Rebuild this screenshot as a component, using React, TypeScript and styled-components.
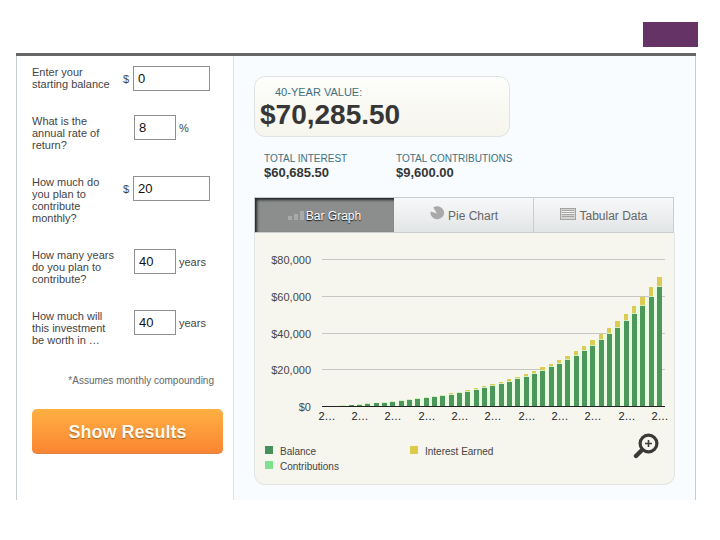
import React from "react";
import styled, { createGlobalStyle, css } from "styled-components";

const GlobalStyle = createGlobalStyle`
  *, *::before, *::after { box-sizing: border-box; }
  body {
    margin: 0;
    background: #fff;
    color: #444;
    font-family: "Liberation Sans", Arial, Helvetica, sans-serif;
    font-size: 11px;
    line-height: 12px;
  }
  input, button { font-family: inherit; margin: 0; }
`;

const Page = styled.div`
  padding: 22px 24px 40px 16px;
`;

const Accent = styled.div`
  width: 55px;
  height: 25px;
  margin: 0 -2px 6px auto;
  background: #663366;
`;

const Calculator = styled.main`
  display: grid;
  grid-template-columns: 218px minmax(0, 1fr);
  border-top: 3px solid #666;
`;

const Sidebar = styled.form`
  padding: 10px 10px 40px 15px;
  border-left: 1px solid #c5cdd0;
  border-right: 1px solid #dfe4e6;
`;

const Results = styled.section`
  padding: 20px 20px 15px 20px;
  background: #f8fcfe;
  border-right: 1px solid #c5cdd0;
`;

const Field = styled.div`
  display: grid;
  grid-template-columns: 88px 13px 1fr;
  align-items: start;
`;

const Label = styled.label`
  white-space: pre-line;
  padding-bottom: 25px;
`;

const Unit = styled.span`
  line-height: 26px;
  padding-left: 3px;
`;

const Entry = styled.div<{ $narrow?: boolean }>`
  display: flex;
  padding-left: ${(p) => (p.$narrow ? "1px" : "0")};
`;

const NumberBox = styled.input<{ $narrow?: boolean }>`
  width: ${(p) => (p.$narrow ? "42px" : "77px")};
  height: 25px;
  padding: 0 4px;
  border: 1px solid #8f8f8f;
  border-radius: 0;
  background: #fff;
  color: #111;
  font-size: 13px;
`;

const Footnote = styled.p`
  margin: 4px 9px 22px 0;
  text-align: right;
  font-size: 10px;
  color: #666;
`;

const Submit = styled.button`
  display: block;
  width: 100%;
  height: 45px;
  padding: 2px 0 0;
  border: 0;
  border-bottom: 1px solid #d8854a;
  border-radius: 5px;
  background: linear-gradient(#ffb043, #fb8532);
  color: #fff8e8;
  font-size: 18px;
  font-weight: bold;
  text-shadow: 0 1px 1px #9a6a30;
`;

const Headline = styled.div`
  width: 256px;
  height: 61px;
  padding: 9px 5px 0;
  border: 1px solid #e0e4e0;
  border-radius: 11px;
  background: linear-gradient(#fdfdfb, #f6f5ed);
`;

const Caption = styled.div<{ $indent?: boolean }>`
  color: #41707f;
  font-size: ${(p) => (p.$indent ? "11px" : "10px")};
  padding-left: ${(p) => (p.$indent ? "15px" : "0")};
`;

const Amount = styled.div<{ $large?: boolean }>`
  color: #363636;
  font-weight: bold;
  font-size: ${(p) => (p.$large ? "28px" : "13px")};
  line-height: ${(p) => (p.$large ? "34px" : "16px")};
`;

const Totals = styled.div`
  display: grid;
  grid-template-columns: 132px 1fr;
  padding: 16px 0 16px 10px;
`;

const Tabs = styled.div`
  display: grid;
  grid-template-columns: repeat(3, 1fr);
  margin-right: 1px;
`;

const Tab = styled.button<{ $active?: boolean }>`
  display: flex;
  align-items: center;
  justify-content: center;
  gap: 3px;
  height: 36px;
  padding: 2px 0 0 1px;
  border: 1px solid #c9cdcf;
  border-left-width: 0;
  background: linear-gradient(#f7f8f9, #e2e5e6);
  color: #666;
  font-size: 12px;
  ${(p) =>
    p.$active &&
    css`
      gap: 1px;
      padding-left: 0;
      border-left-width: 1px;
      border-right-width: 0;
      background: #8b8e8d;
      box-shadow: inset 2px 2px 3px #202526;
      color: #fff;
      text-shadow: 0 1px 1px #111;
    `}
`;

const ChartPanel = styled.div`
  padding: 16px 4px 10px 8px;
  border: 1px solid #e3e6e2;
  border-top: 0;
  border-radius: 0 0 11px 11px;
  background: #f6f5ee;
`;

const Chart = styled.svg`
  display: block;
  width: 100%;
  height: auto;
  font-size: 11px;
`;

const ChartFooter = styled.div`
  display: flex;
  justify-content: space-between;
  align-items: flex-start;
  padding: 9px 11px 0 2px;
`;

const Legend = styled.ul`
  display: grid;
  grid-template-columns: 145px 1fr;
  margin: 11px 0 0;
  padding: 0;
  list-style: none;
  font-size: 10px;
  line-height: 15px;
`;

const LegendItem = styled.li<{ $color: string }>`
  display: flex;
  gap: 7px;
  &::before {
    content: "";
    width: 8px;
    height: 8px;
    margin-top: 2px;
    background: ${(p) => p.$color};
  }
`;

const ZoomButton = styled.button`
  padding: 0;
  border: 0;
  background: none;
  line-height: 0;
`;

const YEARS = 40;
const MONTHLY = 20;
const RATE = 0.08 / 12;
const HEIGHT = 147;
const MAX = 80000;

const balanceAfter = (years: number) =>
  ((MONTHLY * ((1 + RATE) ** (12 * years) - 1)) / RATE) * (1 + RATE);

const bars = Array.from({ length: YEARS + 1 }, (_, year) => {
  const total = balanceAfter(year);
  const start = year > 0 ? balanceAfter(year - 1) : 0;
  const scale = (v: number) => Math.round((v / MAX) * HEIGHT);
  return {
    x: Math.round(60.7 + (year * 25) / 3),
    balance: scale(start),
    total: scale(total),
  };
});

const BASE = 157;

function BarChart() {
  return (
    <Chart viewBox="0 0 407 175" role="img" aria-label="Balance by year">
      {[0, 1, 2, 3, 4].map((i) => {
        const y = Math.round(BASE - (i * HEIGHT) / 4);
        return (
          <g key={i}>
            <text x="48" y={y + 5} textAnchor="end" fill="#484848">
              {"$" + (i * 20000).toLocaleString("en-US")}
            </text>
            {i > 0 && <rect x="59" y={y} width="343" height="1" fill="#c6c8c2" />}
          </g>
        );
      })}
      {bars.map((b, i) => (
        <g key={i} shapeRendering="crispEdges">
          {i > 0 && (
            <rect x={b.x - 4} y={BASE - b.balance} width="4" height={b.balance} fill="#ebfae3" />
          )}
          {b.total > b.balance && (
            <>
              <rect x={b.x} y={BASE - b.total} width="5" height={b.total - b.balance} fill="#dccc56" />
              <rect x={b.x} y={BASE - b.balance - 1} width="5" height="1" fill="#d2f0b4" />
            </>
          )}
        </g>
      ))}
      {bars.map((b, i) => (
        <rect key={i} x={b.x} y={BASE - b.balance} width="5" height={b.balance} fill="#4c985a" shapeRendering="crispEdges" />
      ))}
      <rect x="59" y={BASE} width="343" height="1" fill="#222" />
      {bars
        .filter((_, i) => i % 4 === 0)
        .map((b) => (
          <text key={b.x} x={b.x + 3} y={BASE + 14} textAnchor="middle" fill="#222">
            2…
          </text>
        ))}
    </Chart>
  );
}

const BarsIcon = () => (
  <svg width="17" height="12" viewBox="0 0 17 12" fill="#a7aaa9" aria-hidden="true">
    <rect x="0" y="6" width="4" height="4" />
    <rect x="6" y="4" width="4" height="6" />
    <rect x="12" y="1" width="4" height="9" />
  </svg>
);

const PieIcon = () => (
  <svg width="15" height="20" viewBox="0 0 15 20" aria-hidden="true">
    <path d="M7 7.5 3.2 1.6A6.8 6.5 0 1 1 .6 5.5Z" fill="#a9a9a9" />
  </svg>
);

const TableIcon = () => (
  <svg width="16" height="16" viewBox="0 0 16 16" aria-hidden="true">
    <rect x="0.5" y="0.5" width="15" height="11" fill="#d4d4d2" stroke="#a2a2a0" />
    <path d="M2 2.5h12M2 4.5h12M2 6.5h12M2 8.5h12" stroke="#a4a4a2" />
    <path d="M2 3.5h12M2 5.5h12" stroke="#f2f2f0" />
  </svg>
);

const ZoomIcon = () => (
  <svg width="26" height="26" viewBox="0 0 26 26" fill="none" stroke="#3b3a37" aria-hidden="true">
    <path d="M9 17 3 23" strokeWidth="4.4" strokeLinecap="round" />
    <circle cx="15.5" cy="10.5" r="8.4" strokeWidth="3.2" />
    <path d="M15.5 7v7M12 10.5h7" strokeWidth="1.6" />
  </svg>
);

type FieldSpec = { id: string; label: string; value: string; prefix?: string; suffix?: string };

const fields: FieldSpec[] = [
  { id: "balance", label: "Enter your\nstarting balance", value: "0", prefix: "$" },
  { id: "rate", label: "What is the\nannual rate of\nreturn?", value: "8", suffix: "%" },
  { id: "monthly", label: "How much do\nyou plan to\ncontribute\nmonthly?", value: "20", prefix: "$" },
  { id: "years", label: "How many years\ndo you plan to\ncontribute?", value: "40", suffix: "years" },
  { id: "horizon", label: "How much will\nthis investment\nbe worth in …", value: "40", suffix: "years" },
];

export default function App() {
  return (
    <>
      <GlobalStyle />
      <Page>
        <Accent />
        <Calculator>
          <Sidebar onSubmit={(e) => e.preventDefault()}>
            {fields.map((f) => (
              <Field key={f.id}>
                <Label htmlFor={f.id}>{f.label}</Label>
                <Unit>{f.prefix}</Unit>
                <Entry $narrow={!f.prefix}>
                  <NumberBox id={f.id} $narrow={!f.prefix} defaultValue={f.value} />
                  {f.suffix && <Unit>{f.suffix}</Unit>}
                </Entry>
              </Field>
            ))}
            <Footnote>*Assumes monthly compounding</Footnote>
            <Submit type="submit">Show Results</Submit>
          </Sidebar>
          <Results>
            <Headline>
              <Caption $indent>40-YEAR VALUE:</Caption>
              <Amount $large>$70,285.50</Amount>
            </Headline>
            <Totals>
              <div>
                <Caption>TOTAL INTEREST</Caption>
                <Amount>$60,685.50</Amount>
              </div>
              <div>
                <Caption>TOTAL CONTRIBUTIONS</Caption>
                <Amount>$9,600.00</Amount>
              </div>
            </Totals>
            <Tabs role="tablist">
              <Tab role="tab" aria-selected="true" $active>
                <BarsIcon />
                Bar Graph
              </Tab>
              <Tab role="tab" aria-selected="false">
                <PieIcon />
                Pie Chart
              </Tab>
              <Tab role="tab" aria-selected="false">
                <TableIcon />
                Tabular Data
              </Tab>
            </Tabs>
            <ChartPanel>
              <BarChart />
              <ChartFooter>
                <Legend>
                  <LegendItem $color="#46915a">Balance</LegendItem>
                  <LegendItem $color="#dccb4b">Interest Earned</LegendItem>
                  <LegendItem $color="#7fe08e">Contributions</LegendItem>
                </Legend>
                <ZoomButton type="button" aria-label="Enlarge chart">
                  <ZoomIcon />
                </ZoomButton>
              </ChartFooter>
            </ChartPanel>
          </Results>
        </Calculator>
      </Page>
    </>
  );
}
